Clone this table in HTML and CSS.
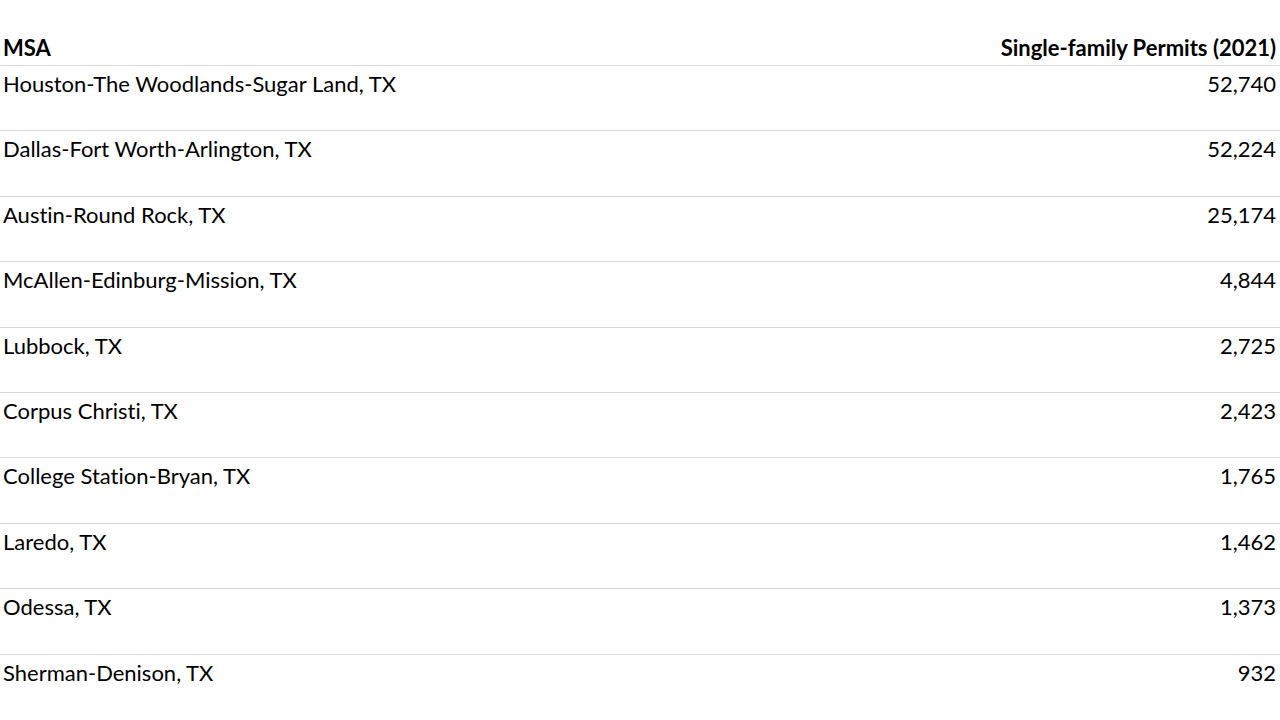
FILE: index.html
```html
<!DOCTYPE html>
<html>
<head>
<meta charset="utf-8">
<link rel="stylesheet" href="styles.css">
</head>
<body>
<div class="table">
  <div class="row head"><div class="name">MSA</div><div class="val">Single-family Permits (2021)</div></div>
  <div class="row"><div class="name">Houston-The Woodlands-Sugar Land, TX</div><div class="val">52,740</div></div>
  <div class="row"><div class="name">Dallas-Fort Worth-Arlington, TX</div><div class="val">52,224</div></div>
  <div class="row"><div class="name">Austin-Round Rock, TX</div><div class="val">25,174</div></div>
  <div class="row"><div class="name">McAllen-Edinburg-Mission, TX</div><div class="val">4,844</div></div>
  <div class="row"><div class="name">Lubbock, TX</div><div class="val">2,725</div></div>
  <div class="row"><div class="name">Corpus Christi, TX</div><div class="val">2,423</div></div>
  <div class="row"><div class="name">College Station-Bryan, TX</div><div class="val">1,765</div></div>
  <div class="row"><div class="name">Laredo, TX</div><div class="val">1,462</div></div>
  <div class="row"><div class="name">Odessa, TX</div><div class="val">1,373</div></div>
  <div class="row"><div class="name">Sherman-Denison, TX</div><div class="val">932</div></div>
</div>
</body>
</html>
```
FILE: styles.css
```css
html, body { margin: 0; padding: 0; background: #fff; }
body { font-family: "Lato", "Liberation Sans", sans-serif; color: #000; font-size: 22px; line-height: 26px; font-variant-ligatures: none; }
.table { display: flex; flex-direction: column; width: 1280px; }
.row { display: flex; justify-content: space-between; align-items: flex-start; height: 65.4px; box-sizing: border-box; border-top: 1px solid #d9d9d9; padding: 5px 4px 0 3px; }
.row.head { height: 65px; border-top: none; align-items: flex-end; padding: 0 4px 4px 3px; font-weight: bold; }
```
